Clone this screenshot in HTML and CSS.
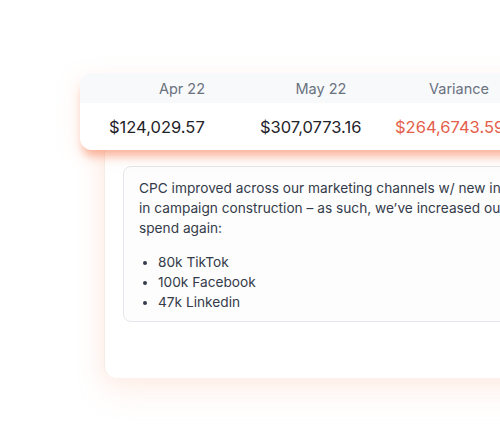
FILE: index.html
```html
<!DOCTYPE html>
<html lang="en">
<head>
<meta charset="utf-8">
<link rel="stylesheet" href="styles.css">
</head>
<body>
<div class="stage">
  <div class="panel">
    <div class="note">
      <p>CPC improved across our marketing channels w/ new investments in campaign construction – as such, we’ve increased our ad spend again:</p>
      <ul>
        <li>80k TikTok</li>
        <li>100k Facebook</li>
        <li>47k Linkedin</li>
      </ul>
    </div>
  </div>
  <div class="table-card">
    <div class="row head">
      <span class="c1">Apr 22</span>
      <span class="c2">May 22</span>
      <span class="c3">Variance</span>
    </div>
    <div class="row body">
      <span>$124,029.57</span>
      <span>$307,0773.16</span>
      <span class="neg">$264,6743.59</span>
    </div>
  </div>
</div>
</body>
</html>
```
FILE: styles.css
```css
* { box-sizing: border-box; }
html, body { margin: 0; padding: 0; background: #ffffff; overflow: hidden; }
body {
  width: 500px;
  height: 439px;
  font-family: Inter, "Noto Sans", sans-serif;
}
.stage {
  position: relative;
  width: 500px;
  height: 439px;
}
.table-card {
  position: absolute;
  left: 80px;
  top: 73px;
  width: 520px;
  background: #fff;
  border-radius: 12px;
  overflow: hidden;
  box-shadow: 0 9px 10px -3px rgba(246, 135, 95, 0.6), -4px 4px 22px rgba(246, 160, 130, 0.14);
}
.row { display: grid; align-items: center; }
.head {
  height: 30px;
  background: #f7f9fb;
  grid-template-columns: 29px 146px 132px 144px;
  color: #6b7280;
  font-size: 14.5px;
}
.head span { text-align: center; }
.head .c1 { grid-column: 2; }
.head .c2 { grid-column: 3; }
.head .c3 { grid-column: 4; }
.body {
  height: 47px;
  padding-left: 29px;
  grid-template-columns: 151px 135px 160px;
  color: #1f2329;
  font-size: 16.5px;
  white-space: nowrap;
}
.neg { color: #e5604b; }
.panel {
  position: absolute;
  left: 104px;
  top: 120px;
  width: 460px;
  height: 258px;
  background: #fff;
  border-radius: 12px;
  border-left: 1px solid #f6ede9;
  padding: 46px 0 0 18px;
  box-shadow: 0 16px 30px rgba(246, 160, 125, 0.14), -6px 0 20px rgba(246, 170, 140, 0.10);
}
.note {
  width: 460px;
  height: 156px;
  border: 1px solid #e4e7eb;
  border-radius: 8px;
  padding: 11px 0 0 15px;
  color: #343b4a;
  font-size: 13.7px;
  line-height: 20px;
  background: #fdfdfd;
}
.note p { margin: 0; width: 430px; }
.note ul { margin: 14px 0 0 0; padding-left: 19px; }
.note li { padding-left: 0; }
```
